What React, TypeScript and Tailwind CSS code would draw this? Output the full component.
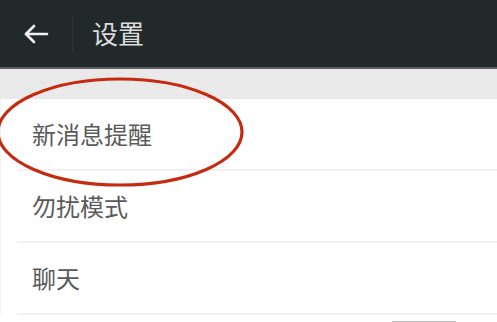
import React from "react";

const rows = ["新消息提醒", "勿扰模式", "聊天"];

export default function App() {
  return (
    <div
      className="relative w-[497px] h-[322px] overflow-hidden bg-white"
      style={{ fontFamily: '"Noto Sans CJK SC", "Noto Sans", sans-serif' }}
    >
      <header className="h-[69px] bg-[#22292b] flex items-center border-b-2 border-[#5b6063]">
        <div className="w-[72px] flex items-center justify-center">
          <svg width="26" height="22" viewBox="0 0 26 22" fill="none" stroke="#f2f2f2" strokeWidth="2.6" strokeLinecap="round" strokeLinejoin="round">
            <path d="M24 11H3" />
            <path d="M11 3L3 11L11 19" />
          </svg>
        </div>
        <div className="w-px h-[36px] bg-[#2d3437]" />
        <div className="pl-[19px] text-[26px] leading-none text-[#dcdcdc] pb-[1px]">设置</div>
      </header>
      <div className="h-[30px] bg-[#e9e9e9]" />
      <div className="border-l border-[#f2f2f2]">
        {rows.map((t) => (
          <div key={t} className="h-[72px] pl-[16px]">
            <div className="h-full flex items-center pl-[15px] border-b-2 border-[#f2f2f2] text-[24px] text-[#5a5a5a]">
              {t}
            </div>
          </div>
        ))}
      </div>
      <div className="absolute left-[392px] top-[321px] w-[64px] h-[1px] bg-[#bdbdbd]" />
      <svg className="absolute left-0 top-0 pointer-events-none" width="497" height="322">
        <ellipse cx="120" cy="132" rx="122" ry="53" fill="none" stroke="#c42b10" strokeWidth="3.2" />
      </svg>
    </div>
  );
}
